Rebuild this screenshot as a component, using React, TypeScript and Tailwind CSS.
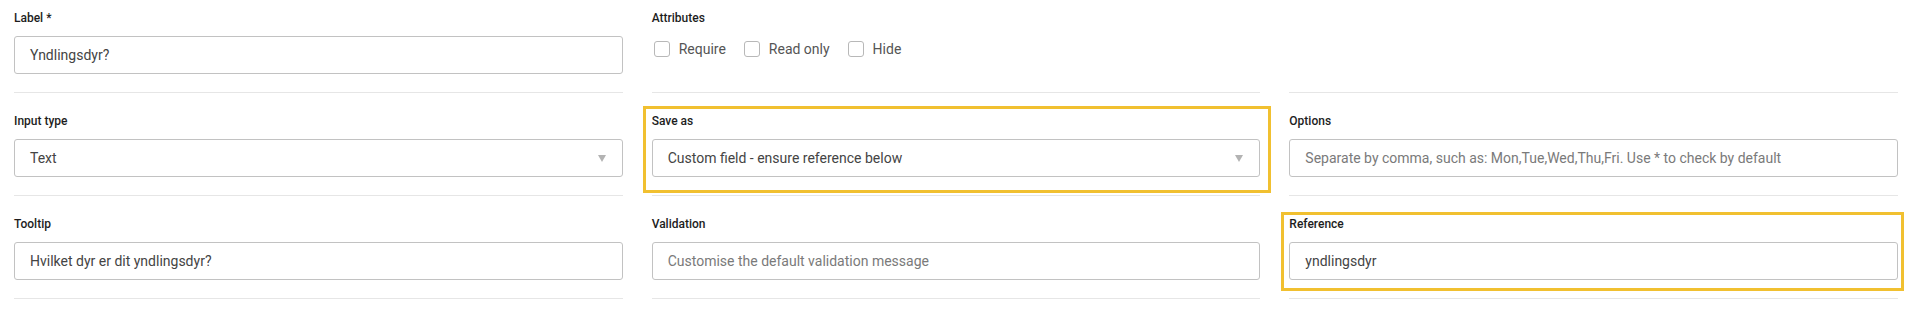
import React from 'react';

const fieldLabel = 'block h-4 text-[12px] leading-4 font-medium text-[#1d1d1d]';
const fieldBox =
  'flex h-[38px] w-full items-center rounded-[3px] border border-[#c2c2c2] bg-white px-[15px] text-[14px]';

const Divider = () => <div className="mt-[18px] h-px w-full bg-[#e6e6e6]" />;

const Highlight: React.FC<{ className: string }> = ({ className }) => (
  <div className={`pointer-events-none absolute border-[3px] border-[#f1c030] ${className}`} />
);

const TextField: React.FC<{ label: string; value?: string; placeholder?: string }> = ({ label, value, placeholder }) => (
  <div className="flex h-16 flex-col">
    <label className={fieldLabel}>{label}</label>
    <div className={`mt-[10px] ${fieldBox}`}>
      {value ? (
        <span className="text-[#444]">{value}</span>
      ) : (
        <span className="text-[#7a7a7a]">{placeholder}</span>
      )}
    </div>
  </div>
);

const SelectField: React.FC<{ label: string; value: string }> = ({ label, value }) => (
  <div className="flex h-16 flex-col">
    <label className={fieldLabel}>{label}</label>
    <div className={`mt-[10px] justify-between ${fieldBox}`}>
      <span className="text-[#444]">{value}</span>
      <svg width="8" height="7" viewBox="0 0 8 7" className="mr-[1px]">
        <path d="M0 0 H8 L4 7 Z" fill="#b3b3b3" />
      </svg>
    </div>
  </div>
);

const Checkbox: React.FC<{ label: string }> = ({ label }) => (
  <div className="flex items-center gap-[9px]">
    <span className="h-4 w-4 rounded-[3px] border border-[#b8b8b8] bg-white" />
    <span className="text-[14px] leading-4 text-[#555]">{label}</span>
  </div>
);

const Cell: React.FC<{ children: React.ReactNode; highlight?: string }> = ({ children, highlight }) => (
  <div className="relative h-[103px] pt-[10px]">
    {children}
    <Divider />
    {highlight && <Highlight className={highlight} />}
  </div>
);

export default function App() {
  return (
    <div className="min-h-[314px] w-full bg-white font-['Roboto',_sans-serif]">
      <div className="grid grid-cols-3 gap-x-[29px] pl-[14px] pr-[7px]">
        <Cell>
          <TextField label="Label *" value="Yndlingsdyr?" />
        </Cell>
        <Cell>
          <div className="flex h-16 flex-col">
            <label className={fieldLabel}>Attributes</label>
            <div className="ml-[2px] mt-[15px] flex items-center gap-[18px]">
              <Checkbox label="Require" />
              <Checkbox label="Read only" />
              <Checkbox label="Hide" />
            </div>
          </div>
        </Cell>
        <Cell>
          <div className="h-16" />
        </Cell>

        <Cell>
          <SelectField label="Input type" value="Text" />
        </Cell>
        <Cell highlight="-left-[9px] -right-[11px] top-[3px] bottom-[13px]">
          <SelectField label="Save as" value="Custom field - ensure reference below" />
        </Cell>
        <Cell>
          <TextField
            label="Options"
            placeholder="Separate by comma, such as: Mon,Tue,Wed,Thu,Fri. Use * to check by default"
          />
        </Cell>

        <Cell>
          <TextField label="Tooltip" value="Hvilket dyr er dit yndlingsdyr?" />
        </Cell>
        <Cell>
          <TextField label="Validation" placeholder="Customise the default validation message" />
        </Cell>
        <Cell highlight="-left-[8px] -right-[6px] top-[6px] bottom-[18px]">
          <TextField label="Reference" value="yndlingsdyr" />
        </Cell>
      </div>
    </div>
  );
}
